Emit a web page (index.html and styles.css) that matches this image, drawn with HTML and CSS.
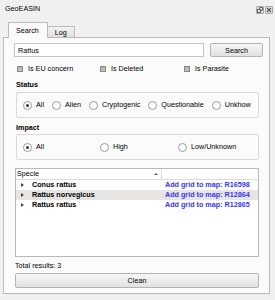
FILE: index.html
```html
<!DOCTYPE html>
<html lang="en">
<head>
    <meta charset="UTF-8">
    <meta name="viewport" content="width=device-width, initial-scale=1.0">
    <title>GeoEASIN</title>
    <link rel="stylesheet" href="styles.css">
</head>
<body>

<div class="title-bar">
    <span class="title">GeoEASIN</span>
    <div class="title-buttons">
        <span class="tb-btn">
            <svg width="6" height="6" viewBox="0 0 6 6"><rect x="0.5" y="2.5" width="3" height="3" fill="none" stroke="#666"/><path d="M2.5 2.5V0.5H5.5V3.5H3.5" fill="none" stroke="#666"/></svg>
        </span>
        <span class="tb-btn">
            <svg width="6" height="6" viewBox="0 0 6 6"><path d="M1 1L5 5M5 1L1 5" stroke="#555" stroke-width="1.2"/></svg>
        </span>
    </div>
</div>

<div class="tabs">
    <div class="tab active">Search</div>
    <div class="tab">Log</div>
</div>

<div class="pane">
    <div class="search-row">
        <input type="text" class="search-input" value="Rattus">
        <button class="btn search-btn">Search</button>
    </div>

    <div class="check-row">
        <label class="check"><input type="checkbox"> Is EU concern</label>
        <label class="check"><input type="checkbox"> Is Deleted</label>
        <label class="check"><input type="checkbox"> Is Parasite</label>
    </div>

    <div class="section-label">Status</div>
    <div class="group status-group">
        <label class="radio"><input type="radio" name="status" checked> All</label>
        <label class="radio"><input type="radio" name="status"> Alien</label>
        <label class="radio"><input type="radio" name="status"> Cryptogenic</label>
        <label class="radio"><input type="radio" name="status"> Questionable</label>
        <label class="radio"><input type="radio" name="status"> Unkhow</label>
    </div>

    <div class="section-label">Impact</div>
    <div class="group impact-group">
        <label class="radio"><input type="radio" name="impact" checked> All</label>
        <label class="radio"><input type="radio" name="impact"> High</label>
        <label class="radio"><input type="radio" name="impact"> Low/Unknown</label>
    </div>

    <div class="tree">
        <div class="tree-header">
            <div class="col-name">Specie<span class="sort-arrow"></span></div>
            <div class="col-link"></div>
        </div>
        <div class="tree-row">
            <div class="col-name"><span class="expander"></span>Conus rattus</div>
            <div class="col-link"><a href="#">Add grid to map: R16598</a></div>
        </div>
        <div class="tree-row selected">
            <div class="col-name"><span class="expander"></span>Rattus norvegicus</div>
            <div class="col-link"><a href="#">Add grid to map: R12864</a></div>
        </div>
        <div class="tree-row">
            <div class="col-name"><span class="expander"></span>Rattus rattus</div>
            <div class="col-link"><a href="#">Add grid to map: R12865</a></div>
        </div>
    </div>

    <div class="total">Total results: 3</div>
    <button class="btn clean-btn">Clean</button>
</div>

</body>
</html>
```

FILE: styles.css
```css
* {
    box-sizing: border-box;
}
body {
    margin: 0;
    width: 275px;
    height: 300px;
    background-color: #f0f0f0;
    font-family: "Liberation Sans", Arial, sans-serif;
    font-size: 7.2px;
    color: #000;
    overflow: hidden;
}
.title-bar {
    height: 22px;
    display: flex;
    justify-content: space-between;
    align-items: flex-start;
    padding: 4px 2px 0 5px;
}
.title {
    line-height: 10px;
}
.title-buttons {
    display: flex;
    gap: 1px;
    margin-top: 2px;
}
.tb-btn {
    width: 8px;
    height: 8px;
    border: 1px solid #a8a8a8;
    border-radius: 1px;
    background: #e6e6e6;
    display: flex;
    align-items: center;
    justify-content: center;
}
.tabs {
    display: flex;
    align-items: flex-end;
    height: 16px;
    margin: 0 0 -1px 8px;
}
.tab {
    position: relative;
    height: 12px;
    line-height: 11px;
    padding: 0 7px;
    border: 1px solid #b9b9b9;
    border-left: none;
    background: linear-gradient(#f2f2f2, #e0e0e0);
}
.tab.active {
    height: 16px;
    line-height: 15px;
    padding: 0 8px 0 7px;
    border-left: 1px solid #b9b9b9;
    border-bottom: none;
    background: #fbfbfb;
}
.pane {
    height: 257px;
    margin: 0 5px 0 3px;
    padding: 5px 10px 0 11px;
    border: 1px solid #b9b9b9;
    background-color: #fbfbfb;
}
.search-row {
    display: flex;
    gap: 6px;
    height: 14px;
    margin: 0 -4px 0 -1px;
}
.search-input {
    flex: 1;
    height: 14px;
    padding: 0 3px;
    border: 1px solid #c5c5c5;
    background: #fff;
    font: inherit;
    outline: none;
}
.btn {
    font: inherit;
    color: #000;
    border: 1px solid #b4b4b4;
    border-radius: 2px;
    background: linear-gradient(#f6f6f6, #e2e2e2);
    padding: 0;
}
.search-btn {
    width: 53px;
    height: 14px;
}
.check-row {
    display: grid;
    grid-template-columns: 83px 84px 1fr;
    height: 10px;
    margin-top: 7px;
    padding-left: 2px;
}
.check, .radio {
    display: flex;
    align-items: center;
    gap: 5px;
    line-height: 10px;
    white-space: nowrap;
}
.check input {
    appearance: none;
    margin: 0;
    width: 6px;
    height: 6px;
    border: 1px solid #8a8a8a;
    background: linear-gradient(#b2b2b2, #c4c4c4);
}
.section-label {
    font-weight: bold;
    line-height: 10px;
    margin-top: 6px;
    padding-left: 1px;
}
.status-group + .section-label {
    margin-top: 5px;
}
.group {
    height: 26px;
    margin: 2px 0 0 1px;
    border: 1px solid #dadada;
    border-radius: 2px;
    padding-left: 6px;
    align-items: center;
}
.status-group {
    display: flex;
    gap: 8px;
}
.impact-group {
    display: grid;
    grid-template-columns: 77px 78px 1fr;
    margin-top: 1px;
}
.radio {
    gap: 4px;
}
.radio input {
    appearance: none;
    margin: 0;
    width: 9px;
    height: 9px;
    border: 1px solid #9a9a9a;
    border-radius: 50%;
    background: #fff;
    display: flex;
    align-items: center;
    justify-content: center;
}
.radio input:checked::after {
    content: "";
    width: 3px;
    height: 3px;
    border-radius: 50%;
    background: #333;
}
.tree {
    height: 89px;
    margin-top: 8px;
    border: 1px solid #b9b9b9;
    background: #fff;
}
.tree-header, .tree-row {
    display: grid;
    grid-template-columns: 146px 1fr;
}
.tree-header {
    height: 11px;
    line-height: 10px;
    border-bottom: 1px solid #dcdcdc;
}
.tree-header .col-name {
    position: relative;
    padding-left: 1px;
    border-right: 1px solid #dcdcdc;
}
.sort-arrow {
    position: absolute;
    right: 3px;
    top: 4px;
    border-left: 2px solid transparent;
    border-right: 2px solid transparent;
    border-bottom: 2px solid #555;
}
.tree-row {
    height: 10px;
    line-height: 10px;
}
.tree-row.selected {
    background-color: #e6e5e3;
}
.tree-row .col-name {
    display: flex;
    align-items: center;
    font-weight: bold;
    white-space: nowrap;
}
.expander {
    width: 0;
    height: 0;
    margin: 0 8px 0 5px;
    border-top: 2.5px solid transparent;
    border-bottom: 2.5px solid transparent;
    border-left: 3px solid #444;
}
.col-link {
    padding-left: 3px;
}
.col-link a {
    color: #3636f2;
    font-weight: bold;
    text-decoration: none;
    white-space: nowrap;
}
.total {
    line-height: 10px;
    margin-top: 4px;
}
.clean-btn {
    display: block;
    width: 100%;
    height: 15px;
    margin-top: 2px;
}
```
